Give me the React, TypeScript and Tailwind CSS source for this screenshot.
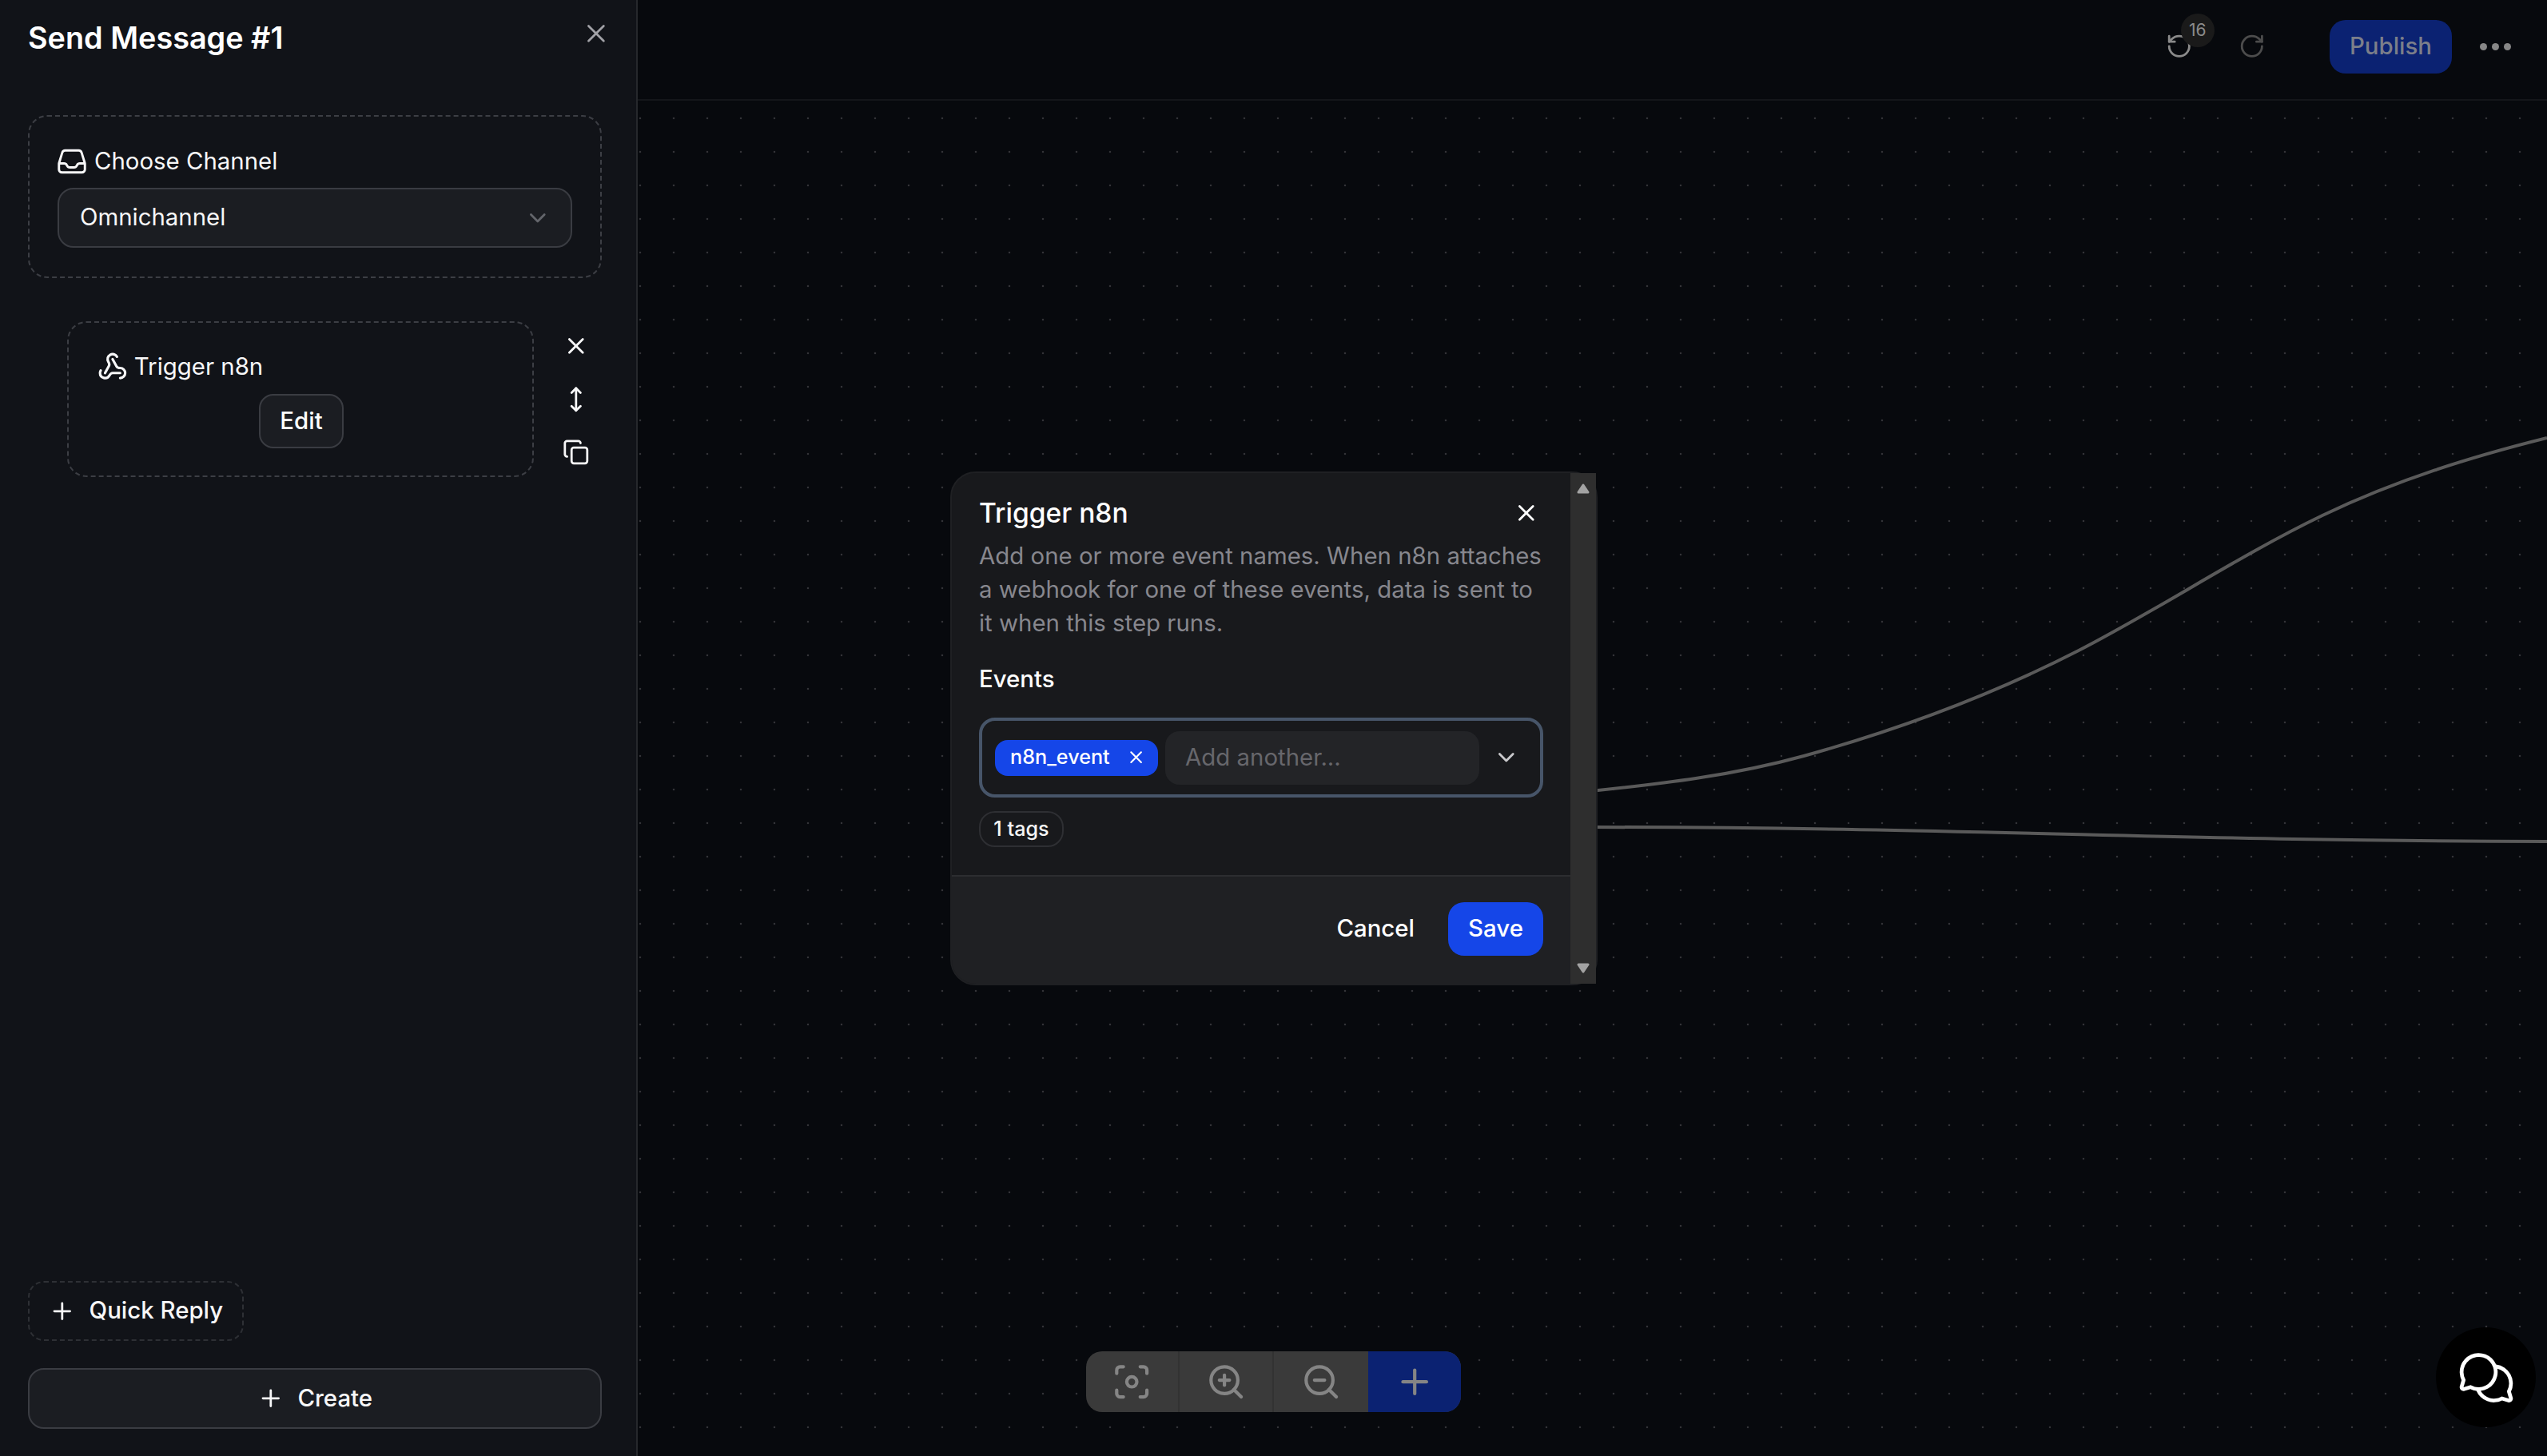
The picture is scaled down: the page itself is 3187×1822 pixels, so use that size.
import { ChevronDown, Copy, Focus, MoveVertical, Plus, RotateCcw, RotateCw, Webhook, X, ZoomIn, ZoomOut } from 'lucide-react';
import { PiChatsCircle } from 'react-icons/pi';

function InboxIcon() {
  return (
    <svg width="40" height="40" viewBox="0 0 24 24" fill="none" stroke="currentColor" strokeWidth="1.75" strokeLinecap="round" strokeLinejoin="round" className="-ml-[2px] shrink-0">
      <path d="M2.25 13.5h3.86a2.25 2.25 0 0 1 2.012 1.244l.256.512a2.25 2.25 0 0 0 2.012 1.244h3.218a2.25 2.25 0 0 0 2.012-1.244l.256-.512a2.25 2.25 0 0 1 2.013-1.244h3.859m-19.5.338V18a2.25 2.25 0 0 0 2.25 2.25h15A2.25 2.25 0 0 0 21.75 18v-4.162c0-.224-.034-.447-.1-.661L19.24 5.338a2.25 2.25 0 0 0-2.15-1.588H6.911a2.25 2.25 0 0 0-2.15 1.588L2.35 13.177a2.25 2.25 0 0 0-.1.661Z" />
    </svg>
  );
}

function Sidebar() {
  return (
    <aside className="flex h-full w-[798px] shrink-0 flex-col border-r-2 border-[#26282c] bg-[#111318] pb-[34px] pl-[35px] pr-[43px] text-[#f7f7f8]">
      {/* Header */}
      <div className="mt-[20px] flex h-[54px] items-center justify-between">
        <h1 className="text-[37.8px] font-semibold leading-[54px] text-white">Send Message #1</h1>
        <X size={37.8} strokeWidth={1.75} className="-mr-[12px] -mt-[10px] text-[#a1a1a6]" />
      </div>

      {/* Channel */}
      <div className="mt-[70px] h-[204px] rounded-[24px] border-2 border-dashed border-[#3c3e44] px-[35px] pt-[36px]">
        <div className="flex h-[40px] items-center gap-[8px] text-[29.4px]">
          <InboxIcon />
          <span>Choose Channel</span>
        </div>
        <div className="mt-[13px] flex h-[75px] items-center justify-between rounded-[20px] border-2 border-[#3a3c42] bg-[#1b1d22] pl-[26px] pr-[24px]">
          <span className="text-[29.4px]">Omnichannel</span>
          <ChevronDown size={33.6} strokeWidth={2} className="text-[#63656b]" />
        </div>
      </div>

      {/* Step */}
      <div className="ml-[49px] mt-[54px] flex items-start">
        <div className="h-[195px] w-[584px] rounded-[24px] border-2 border-dashed border-[#3c3e44] pl-[34px] pt-[35px]">
          <div className="flex h-[40px] items-center gap-[8px] text-[29.4px]">
            <Webhook size={37.8} className="ml-[2px]" />
            <span>Trigger n8n</span>
          </div>
          <div className="mt-[14px] flex justify-center pr-[32px]">
            <button className="h-[68px] w-[106px] rounded-[18px] border-2 border-[#3a3c42] bg-[#1b1d22] text-[29.4px] font-medium text-white">Edit</button>
          </div>
        </div>
        <div className="ml-[36px] mt-[14px] flex flex-col gap-[33px]">
          <X size={33.6} />
          <MoveVertical size={33.6} />
          <Copy size={33.6} />
        </div>
      </div>

      {/* Actions */}
      <button className="mt-auto flex h-[75px] w-[270px] items-center gap-[17px] rounded-[20px] border-2 border-dashed border-[#2e3035] pl-[24px] text-[29.4px] font-medium">
        <Plus size={33.6} />
        Quick Reply
      </button>
      <button className="mt-[34px] flex h-[76px] items-center justify-center gap-[17px] rounded-[20px] border-2 border-[#3a3c42] bg-[#1b1d22] text-[29.4px] font-medium">
        <Plus size={33.6} />
        Create
      </button>
    </aside>
  );
}

function TopBar() {
  return (
    <header className="flex h-[126px] items-center justify-end border-b-2 border-[#14161a] pb-[8px] pr-[45px]">
      <div className="relative">
        <RotateCcw size={33.6} className="text-[#8a8a8a]" />
        <span className="absolute -top-[24px] left-[19px] flex h-[42px] w-[42px] items-center justify-center rounded-full bg-[#1a1a1a] text-[21px] text-[#8c8c8c]">16</span>
      </div>
      <RotateCw size={33.6} className="ml-[58px] text-[#4c4c4c]" />
      <button className="ml-[80px] h-[67px] w-[153px] rounded-[20px] bg-[#0b2272] text-[29.4px] font-medium text-[#7c7f8a]">Publish</button>
      <div className="ml-[35px] flex gap-[6px]">
        <span className="h-[9px] w-[9px] rounded-full bg-[#878787]" />
        <span className="h-[9px] w-[9px] rounded-full bg-[#878787]" />
        <span className="h-[9px] w-[9px] rounded-full bg-[#878787]" />
      </div>
    </header>
  );
}

function EventsDialog() {
  return (
    <div className="absolute left-[391px] top-[464px] flex h-[643px] w-[810px] rounded-[32px] border-2 border-[#1f2023] bg-[#18191c]">
      <div className="flex min-w-0 flex-1 flex-col">
        <div className="flex-1 px-[34px] pt-[26px]">
          <div className="flex h-[48px] items-center justify-between">
            <h2 className="text-[33.6px] font-medium text-white">Trigger n8n</h2>
            <X size={33.6} className="mr-[4px] text-white" />
          </div>
          <p className="mt-[9px] text-[29.4px] leading-[42px] text-[#87878e]">
            Add one or more event names. When n8n attaches a webhook for one of these events, data is sent to it when this step runs.
          </p>
          <div className="mt-[28px] text-[29.4px] font-medium leading-[42px] text-white">Events</div>
          <div className="mt-[27px] flex h-[100px] items-center rounded-[20px] border-4 border-[#475569] pl-[16px]">
            <span className="flex h-[45px] w-[204px] items-center justify-between rounded-[16px] bg-[#1546e8] pl-[19px] pr-[15px] text-[25.2px] font-medium text-white">
              n8n_event
              <X size={25.2} />
            </span>
            <div className="ml-[9px] flex h-[67px] w-[393px] items-center rounded-[18px] bg-[#232427] pl-[25px] text-[29.4px] text-[#67676c]">Add another...</div>
            <ChevronDown size={33.6} className="ml-[17px] text-[#c9c9cc]" />
          </div>
          <span className="mt-[17px] flex h-[45px] w-[106px] items-center justify-center rounded-[20px] border-2 border-[#2e2f33] text-[25.2px] font-medium text-[#f5f5f5]">1 tags</span>
        </div>
        <div className="flex h-[136px] items-center justify-end gap-[42px] rounded-bl-[30px] border-t-2 border-[#2c2d30] bg-[#1f2023] pb-[3px] pr-[34px]">
          <button className="text-[29.4px] font-medium text-white">Cancel</button>
          <button className="h-[67px] w-[119px] rounded-[20px] bg-[#1546e8] text-[29.4px] font-medium text-white">Save</button>
        </div>
      </div>
      {/* Scrollbar */}
      <div className="flex w-[32px] shrink-0 flex-col items-center justify-between bg-[#2e2e2e] py-[13px]">
        <svg width="16" height="13" viewBox="0 0 16 13" fill="#a3a3a3" stroke="#a3a3a3" strokeWidth="3" strokeLinejoin="round"><path d="M8 2 14 11H2Z" /></svg>
        <svg width="16" height="13" viewBox="0 0 16 13" fill="#a3a3a3" stroke="#a3a3a3" strokeWidth="3" strokeLinejoin="round"><path d="M8 11 14 2H2Z" /></svg>
      </div>
    </div>
  );
}

function ZoomBar() {
  return (
    <div className="absolute left-[561px] top-[1565px] flex h-[76px] w-[469px] overflow-hidden rounded-[20px] bg-[#3a3a3a] text-[#858585]">
      <div className="flex w-[117px] items-center justify-center border-r-2 border-[#323232]"><Focus size={50.4} /></div>
      <div className="flex w-[118px] items-center justify-center border-r-2 border-[#323232]"><ZoomIn size={50.4} /></div>
      <div className="flex w-[118px] items-center justify-center"><ZoomOut size={50.4} /></div>
      <div className="flex w-[116px] items-center justify-center bg-[#0b2272]"><Plus size={50.4} /></div>
    </div>
  );
}

export default function App() {
  return (
    <div className="flex h-[1822px] w-[3187px] overflow-hidden bg-[#07090d] font-[Inter,sans-serif]">
      <Sidebar />
      <main className="flex min-w-0 flex-1 flex-col">
        <TopBar />
        <div className="relative flex-1 bg-[radial-gradient(circle,#333337_1.4px,transparent_1.6px)] bg-[size:42px_42px] bg-[position:-18px_1px]">
          {/* Connections */}
          <svg className="absolute inset-0 h-full w-full" viewBox="798 126 2389 1696" fill="none" stroke="#5a5a5a" strokeWidth="4">
            <path d="M1990 990C2079 981 2168 970.6 2257 946C2372 914 2486 873 2601 814C2703 761.5 2804 694 2906 645C3000 600 3093 571.5 3187 548" />
            <path d="M1990 1035C2500 1036 2700 1052 3187 1053" />
          </svg>
          <EventsDialog />
          <ZoomBar />
          <div className="absolute bottom-[36px] right-[14px] flex h-[125px] w-[125px] items-center justify-center rounded-full bg-black text-white">
            <PiChatsCircle size={76} />
          </div>
        </div>
      </main>
    </div>
  );
}
